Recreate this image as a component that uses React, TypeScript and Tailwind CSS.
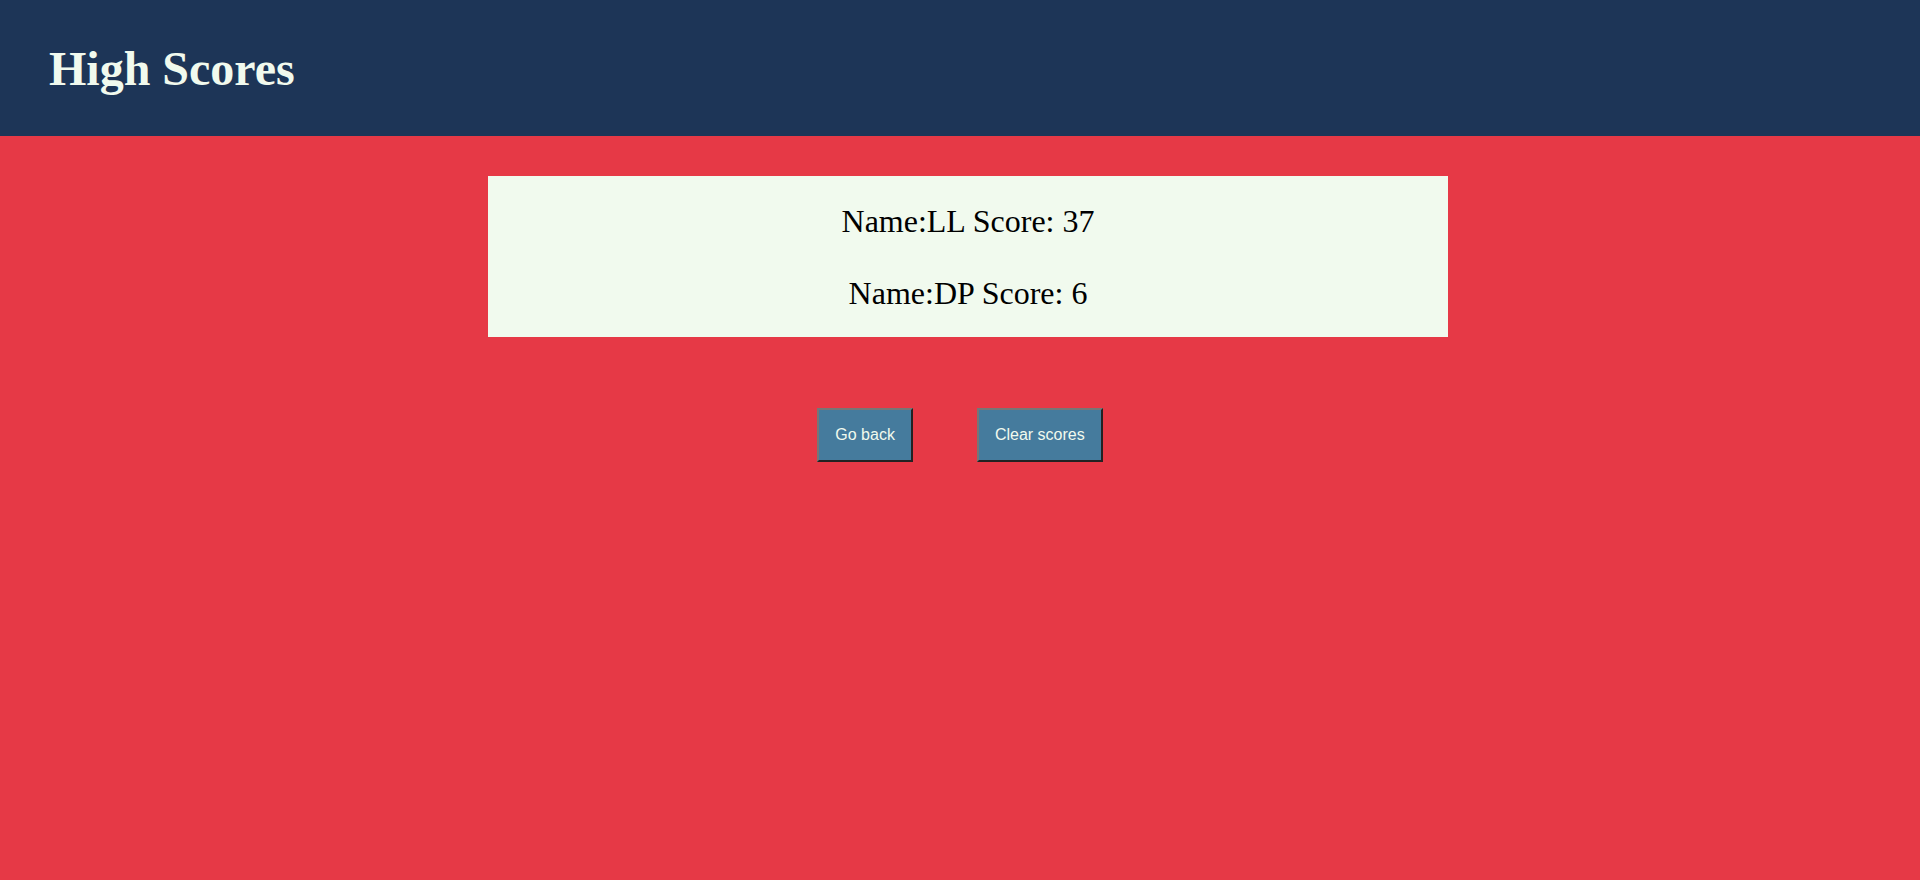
export default function App() {
  const scores = [
    { name: "LL", score: 37 },
    { name: "DP", score: 6 },
  ];

  return (
    <div className="min-h-screen bg-[#e63946] font-['Liberation_Serif',serif]">
      <header className="bg-[#1d3557] pl-[49px] pt-[41px] pb-[40px]">
        <h1 className="text-[48px] leading-[1.15] font-bold text-[#f1faee]">
          High Scores
        </h1>
      </header>

      <div className="flex justify-center pl-4 pt-10">
        <ul className="w-[960px] bg-[#f1faee] pt-[27px] pb-[25px] flex flex-col gap-[35px] text-center text-[32px] leading-[1.15] text-black">
          {scores.map(s => (
            <li key={s.name}>
              Name:{s.name} Score: {s.score}
            </li>
          ))}
        </ul>
      </div>

      <div className="flex justify-center gap-16 pt-[71px] font-['Liberation_Sans',sans-serif]">
        <button className="bg-[#457b9d] text-[#f1faee] text-base leading-[1.15] px-4 py-4 border-2 border-t-[#767676] border-l-[#767676] border-b-[#222] border-r-[#222]">
          Go back
        </button>
        <button className="bg-[#457b9d] text-[#f1faee] text-base leading-[1.15] px-4 py-4 border-2 border-t-[#767676] border-l-[#767676] border-b-[#222] border-r-[#222]">
          Clear scores
        </button>
      </div>
    </div>
  );
}
